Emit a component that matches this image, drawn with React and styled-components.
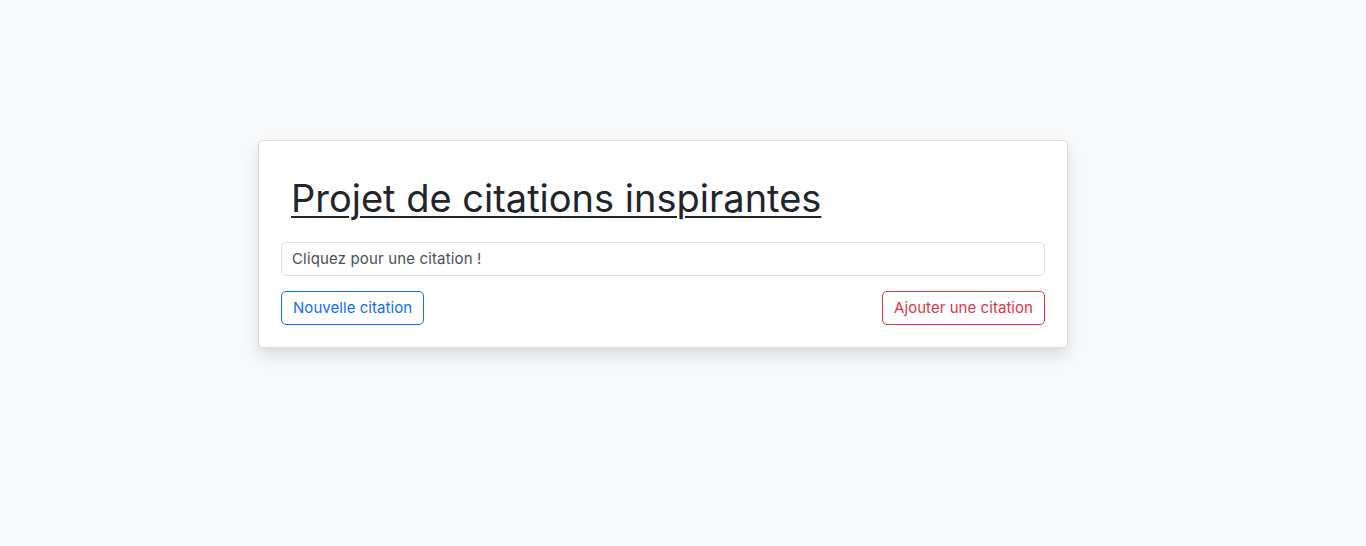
import React from "react";
import styled, { createGlobalStyle } from "styled-components";

const GlobalStyle = createGlobalStyle`
  html, body {
    margin: 0;
    padding: 0;
    background: #f8f9fa;
    font-family: "Inter", "Liberation Sans", sans-serif;
  }
`;

const Page = styled.div`
  min-height: 546px;
  display: flex;
  justify-content: center;
  padding: 140px 40px 0 0;
  box-sizing: border-box;
`;

const Card = styled.div`
  width: 810px;
  height: 208px;
  box-sizing: border-box;
  background: #fff;
  border: 1px solid #dadcde;
  border-radius: 5px;
  box-shadow: 0 8px 16px rgba(0, 0, 0, 0.12);
  padding: 0 22px;
  display: flex;
  flex-direction: column;
`;

const Title = styled.h1`
  margin: 0;
  padding: 35px 0 0 10px;
  height: 101px;
  box-sizing: border-box;
  font-weight: 400;
  font-size: 38px;
  line-height: 45px;
  color: #212529;
  text-decoration: underline;
  text-decoration-thickness: 2px;
  text-underline-offset: 4px;
`;

const Quote = styled.div`
  height: 34px;
  box-sizing: border-box;
  border: 1px solid #dee2e6;
  border-radius: 5px;
  padding: 0 10px 2px;
  display: flex;
  align-items: center;
  font-size: 15px;
  letter-spacing: 0.15px;
  color: #495057;
`;

const Actions = styled.div`
  display: flex;
  justify-content: space-between;
  margin-top: 15px;
`;

const Button = styled.button`
  height: 34px;
  padding: 0 11px 2px;
  background: #fff;
  border: 1px solid ${(p) => p.$color};
  color: ${(p) => p.$color};
  border-radius: 5px;
  font-family: inherit;
  font-size: 15px;
  letter-spacing: 0.05px;
  cursor: pointer;
`;

export default function App() {
  return (
    <>
      <GlobalStyle />
      <Page>
        <Card>
          <Title>Projet de citations inspirantes</Title>
          <Quote>Cliquez pour une citation !</Quote>
          <Actions>
            <Button $color="#0d6efd">Nouvelle citation</Button>
            <Button $color="#dc3545">Ajouter une citation</Button>
          </Actions>
        </Card>
      </Page>
    </>
  );
}
